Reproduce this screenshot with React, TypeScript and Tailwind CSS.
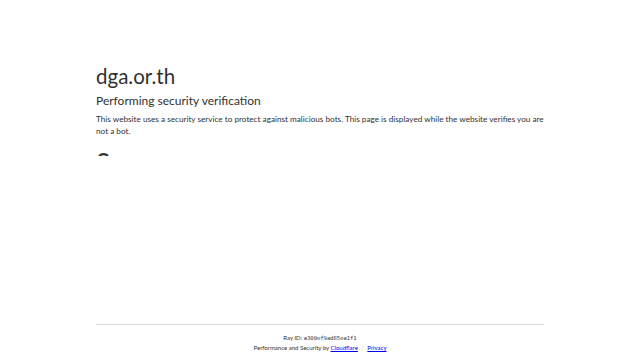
export default function App() {
  return (
    <div className="w-[640px] h-[360px] bg-white flex flex-col" style={{ fontFamily: 'Lato, sans-serif' }}>
      <div className="flex-1 px-[96px] pt-[62px]">
        <h1 className="text-[20.5px] leading-[28px] text-[#313131] font-normal">dga.or.th</h1>
        <h2 className="text-[12px] leading-[18px] text-[#313131] mt-[2px]">Performing security verification</h2>
        <p className="text-[8.2px] leading-[12px] text-[#313131] mt-[3px]">
          This website uses a security service to protect against malicious bots. This page is displayed while the website verifies you are not a bot.
        </p>
        <div className="h-[6px] overflow-hidden mt-[13px]">
          <div className="text-[26px] leading-[26px] text-[#313131]">S</div>
        </div>
      </div>
      <div className="mx-[96px] border-t border-[#e0e0e0] pt-[8px] pb-[8px] flex flex-col items-center text-[6px] leading-[9px] text-[#313131]">
        <div>Ray ID: <code className="text-[5.5px]" style={{ fontFamily: '"DejaVu Sans Mono", monospace' }}>a300ef9ad85ea1f1</code></div>
        <div>
          Performance and Security by <a className="text-[#0000ee] underline">Cloudflare</a>
          <span className="mx-[4px] text-[#d9d9d9]">|</span>
          <a className="text-[#0000ee] underline">Privacy</a>
        </div>
      </div>
    </div>
  );
}
